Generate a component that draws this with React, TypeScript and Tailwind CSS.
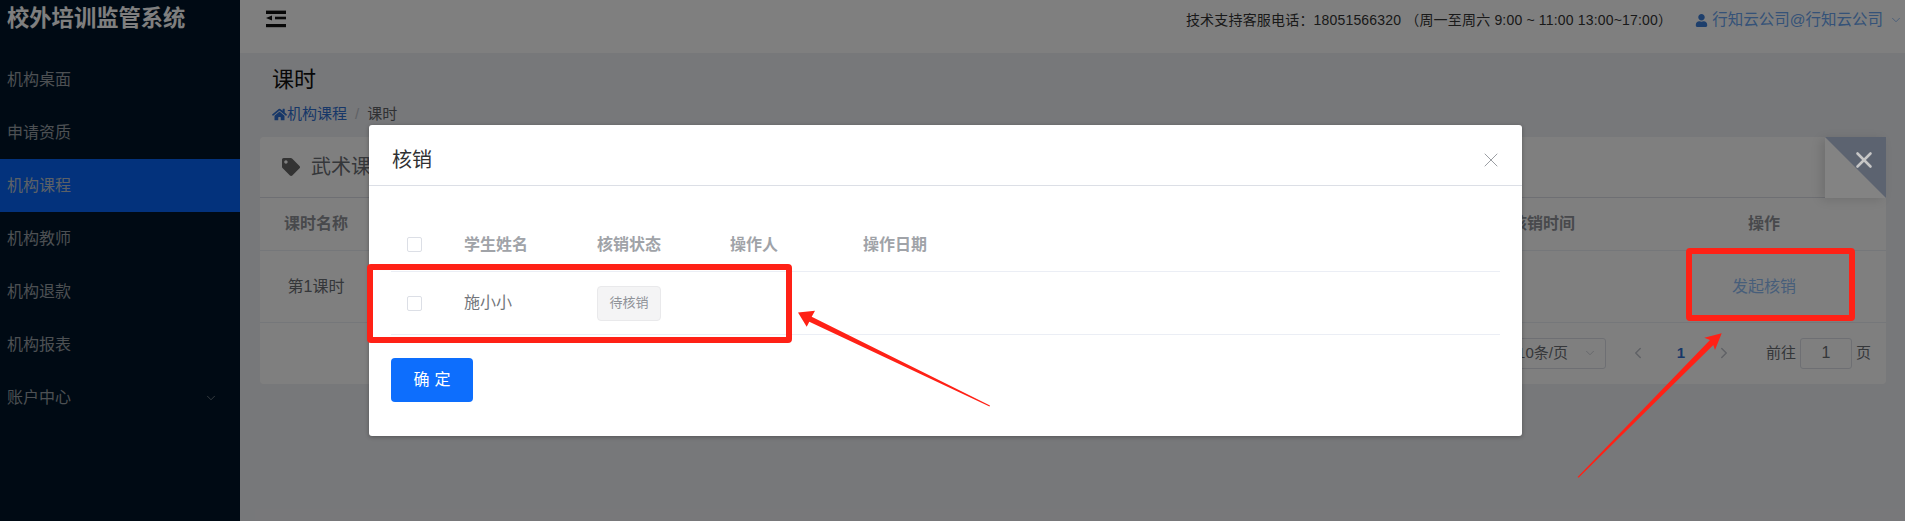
import { FaHome, FaTag, FaUser } from "react-icons/fa";
import { ChevronDown, ChevronLeft, ChevronRight, X } from "lucide-react";

const menus = ["机构桌面", "申请资质", "机构课程", "机构教师", "机构退款", "机构报表", "账户中心"];

const Sidebar = () => {
    return (
        <aside className="w-[240px] shrink-0 bg-[#001529] text-white">
            <div className="h-[53px] pl-[7px] pt-[3px] text-[22.3px] leading-[32px] font-bold">校外培训监管系统</div>
            {menus.map((m, i) => (
                <div
                    key={m}
                    className={
                        i === 2
                            ? "h-[53px] pl-[7px] pr-[22px] flex items-center justify-between text-[16px] text-[#b9c3cf] bg-[#0665f8]"
                            : "h-[53px] pl-[7px] pr-[22px] flex items-center justify-between text-[16px] text-[#9aa0a6]"
                    }
                >
                    {m}
                    {m === "账户中心" && <ChevronDown size={14} strokeWidth={1.2} />}
                </div>
            ))}
        </aside>
    );
};

const Header = () => {
    return (
        <header className="h-[53px] bg-white pl-[26px] pr-[2px] flex items-start justify-between">
            <svg width="20" height="18" viewBox="0 0 20 18" className="mt-[10px] text-[#111]" fill="currentColor">
                <rect x="0" y="0.6" width="20" height="3.4" />
                <rect x="9" y="6.7" width="11" height="2.6" />
                <path d="M6 5.5v5L0 8z" />
                <rect x="0" y="14" width="20" height="3.2" />
            </svg>
            <div className="flex items-center h-[40px]">
                <span className="text-[14px] tracking-[0.18px] text-[#333]">技术支持客服电话：18051566320 （周一至周六 9:00 ~ 11:00 13:00~17:00）</span>
                <span className="ml-[23px] flex items-center text-[15.5px] text-[#6aa5f0]">
                    <FaUser size={13} className="mr-[4px] text-[#3d7fd9]" />
                    行知云公司@行知云公司
                </span>
                <ChevronDown size={14} strokeWidth={1.2} className="ml-[6px] text-[#6aa5f0]" />
            </div>
        </header>
    );
};

const CourseCard = () => {
    return (
        <div className="mt-[20px] ml-[20px] mr-[19px] h-[247px] bg-white rounded-[4px] text-[#6b6e74]">
            <div className="h-[61px] pl-[22px] flex items-center border-b border-[#dcdfe6] text-[20px]">
                <FaTag size={18} className="mr-[11px] text-[#666]" />
                武术课程
            </div>
            <div className="h-[53px] flex items-center border-b border-[#ebeef5] text-[16px] font-bold text-[#909399]">
                <div className="w-[112px] text-center">课时名称</div>
                <div className="ml-auto w-[198px] text-center">核销时间</div>
                <div className="w-[244px] text-center">操作</div>
            </div>
            <div className="h-[72px] flex items-center border-b border-[#ebeef5] text-[16px]">
                <div className="w-[112px] text-center">第1课时</div>
                <div className="ml-auto w-[244px] text-center text-[#8fbcf5]">发起核销</div>
            </div>
            <div className="h-[60px] pr-[15px] flex items-center justify-end text-[15px]">
                <div className="w-[100px] h-[31px] pr-[8px] flex items-center justify-end border border-[#dcdfe6] rounded-[3px]">
                    10条/页
                    <ChevronDown size={14} strokeWidth={1.3} className="ml-[15px] text-[#c0c4cc]" />
                </div>
                <ChevronLeft size={18} strokeWidth={2} className="ml-[23px] text-[#c0c4cc]" />
                <span className="w-[68px] text-center font-bold text-[#2f6fd0]">1</span>
                <ChevronRight size={18} strokeWidth={2} className="text-[#c0c4cc]" />
                <span className="ml-[33px]">前往</span>
                <div className="mx-[4px] w-[52px] h-[31px] flex items-center justify-center border border-[#dcdfe6] rounded-[3px] text-[16px]">1</div>
                <span>页</span>
            </div>
        </div>
    );
};

// folded corner of the card, brighter than the mask behind it
const CardCorner = () => {
    return (
        <div className="absolute left-[1825px] top-[137px] w-[61px] h-[61px] bg-[#838383] shadow-[-4px_2px_10px_rgba(0,0,0,0.12)]">
            <svg width="61" height="61" viewBox="0 0 61 61">
                <path d="M0 0H61V61z" fill="#5c6370" />
            </svg>
            <X size={26} strokeWidth={2.4} className="absolute top-[10px] right-[9px] text-[#c6c6c6]" />
        </div>
    );
};

const VerifyDialog = () => {
    return (
        <div className="absolute left-[369px] top-[125px] w-[1153px] h-[311px] bg-white rounded-[3px] shadow-[0_1px_4px_rgba(0,0,0,0.3)]">
            <div className="h-[61px] pt-[10px] pl-[23px] pr-[19px] flex items-center justify-between border-b border-[#dcdfe6] text-[20px] text-[#303133]">
                核销
                <X size={24} strokeWidth={0.9} className="text-[#909399]" />
            </div>
            <div className="mx-[22px] mt-[25px]">
                <div className="h-[61px] grid grid-cols-[73px_133px_133px_133px_133px] items-center border-b border-[#ebeef5] pt-[7px] text-[16px] font-bold text-[#a0a3a8]">
                    <span className="ml-[16px] w-[15px] h-[15px] border border-[#dcdfe6] rounded-[2px]" />
                    <span>学生姓名</span>
                    <span>核销状态</span>
                    <span>操作人</span>
                    <span>操作日期</span>
                </div>
                <div className="h-[63px] grid grid-cols-[73px_133px_133px] items-center border-b border-[#ebeef5] text-[16px] text-[#72757a]">
                    <span className="ml-[16px] w-[15px] h-[15px] border border-[#dcdfe6] rounded-[2px]" />
                    <span>施小小</span>
                    <span className="w-[64px] h-[35px] flex items-center justify-center bg-[#f4f4f5] border border-[#e9e9eb] rounded-[4px] text-[13px] text-[#909399]">待核销</span>
                </div>
            </div>
            <button className="ml-[22px] mt-[23px] w-[82px] h-[44px] pl-[5px] bg-[#0d6efd] rounded-[4px] text-[16px] tracking-[5px] text-white">确定</button>
        </div>
    );
};

// red marks drawn on top of the screenshot
const Annotations = () => {
    return (
        <svg width="1905" height="521" viewBox="0 0 1905 521" className="absolute inset-0 pointer-events-none">
            <g fill="none" stroke="#ff2116" strokeWidth="6" strokeLinejoin="round">
                <rect x="370" y="267" width="419" height="73" rx="1" />
                <rect x="1689" y="251" width="163" height="67" rx="1" />
            </g>
            <path d="M798 312.5L815 310.7L811.7 316.7L990 405.5L989.5 406.5L809.3 321.7L806.7 326.7z" fill="#ff2116" />
            <path d="M1721.7 333.3L1715 350L1713.3 345L1578.6 477.8L1577.6 477L1710 340L1704.3 337.7z" fill="#ff2116" />
        </svg>
    );
};

export default function App() {
    return (
        <div className="relative w-[1905px] h-[521px] overflow-hidden flex font-['Liberation_Sans','Noto_Sans_CJK_SC',sans-serif]">
            <Sidebar />
            <div className="flex-1 bg-[#eff0f4]">
                <Header />
                <div className="pl-[32px] pt-[11px] h-[64px]">
                    <h1 className="text-[22px] leading-[32px] text-[#111]">课时</h1>
                    <div className="flex items-center mt-[8px] text-[15px] leading-[20px]">
                        <FaHome size={15} className="text-[#2f6fd0]" />
                        <span className="text-[#2f6fd0]">机构课程</span>
                        <span className="mx-[8px] text-[#c0c4cc]">/</span>
                        <span className="text-[#606266]">课时</span>
                    </div>
                </div>
                <CourseCard />
            </div>
            <div className="absolute inset-0 bg-black/50" />
            <CardCorner />
            <VerifyDialog />
            <Annotations />
        </div>
    );
}
